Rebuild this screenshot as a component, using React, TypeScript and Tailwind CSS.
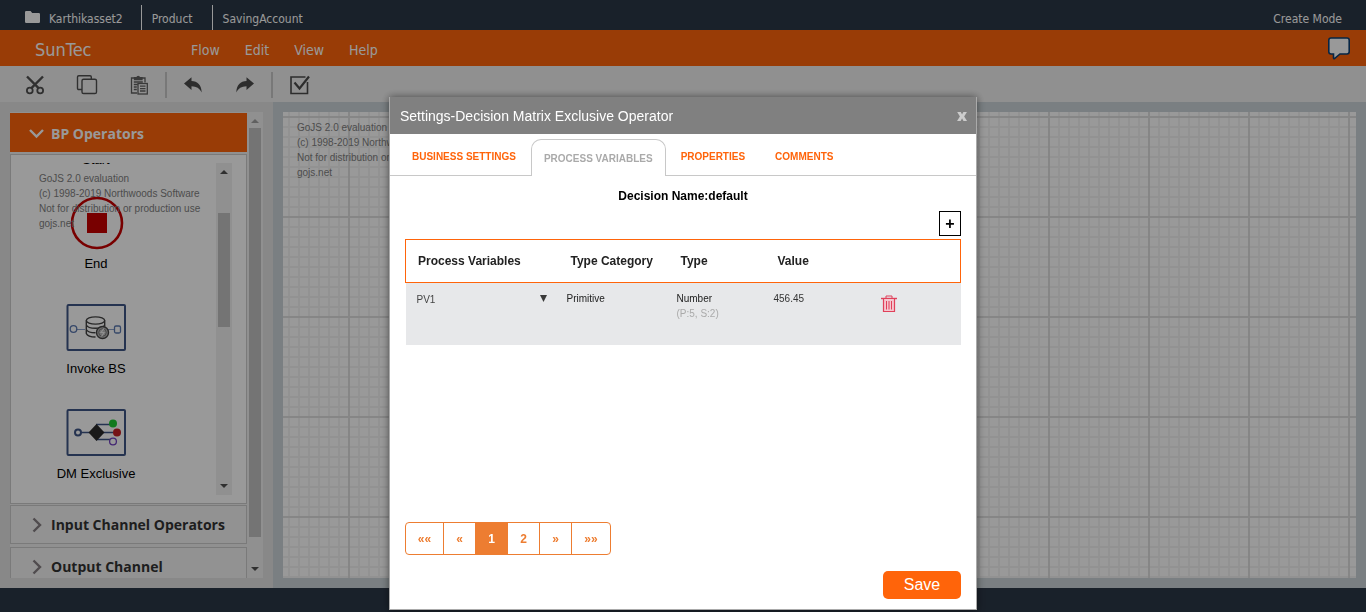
import React, { useState } from 'react';

const PROJECT_PATH = ['Product', 'SavingAccount'];
const MENUS = ['Flow', 'Edit', 'View', 'Help'];
const TABS = ['BUSINESS SETTINGS', 'PROCESS VARIABLES', 'PROPERTIES', 'COMMENTS'];
const PAGES = ['««', '«', '1', '2', '»', '»»'];
const EVALUATION = ['GoJS 2.0 evaluation', '(c) 1998-2019 Northwoods Software', 'Not for distribution or production use', 'gojs.net'];

function Evaluation() {
  return (
    <div className="text-[10px] leading-[15px] whitespace-nowrap text-[#7f7f7f]">
      {EVALUATION.map((line) => (
        <p key={line}>{line}</p>
      ))}
    </div>
  );
}

function TopBar() {
  return (
    <header className="flex h-[30px] shrink-0 items-end bg-[#2b3746] pr-6 pl-6 text-xs text-white">
      <div className="flex h-[25px] items-center pt-0.5 pr-[18px]">
        <svg width="17" height="14" viewBox="0 0 17 14" className="mr-2 mb-1" aria-hidden="true">
          <path d="M1 2.2Q1 1 2.2 1h4.4l1.6 2h6.6Q16 3 16 4.2v7.6q0 1.200-1.200 1.200H2.200Q1 13 1 11.800z" fill="#fff" />
        </svg>
        <span>Karthikasset2</span>
      </div>
      {PROJECT_PATH.map((part) => (
        <div key={part} className="flex h-[25px] items-center border-l border-white pt-0.5 pr-[19px] pl-[10px]">
          {part}
        </div>
      ))}
      <span className="ml-auto flex h-[25px] items-center pt-0.5">Create Mode</span>
    </header>
  );
}

function MenuBar() {
  return (
    <nav className="flex h-9 shrink-0 items-center bg-[#ff640a] pr-[15px] pl-[35px] text-white">
      <span className="mt-1 w-[156px] text-lg">SunTec</span>
      <div className="mt-1 flex gap-[25px] text-sm">
        {MENUS.map((menu) => (
          <button key={menu} type="button">
            {menu}
          </button>
        ))}
      </div>
      <button type="button" aria-label="Messages" className="ml-auto">
        <svg width="24" height="24" viewBox="0 0 24 24" aria-hidden="true">
          <path
            d="M4 2h16q2.200 0 2.200 2.200v11.600q0 2.200-2.200 2.200h-7L7.500 22.500Q6.500 23 6.500 21.800V18H4q-2.200 0-2.200-2.200V4.200Q1.800 2 4 2z"
            fill="#fff"
            stroke="#0b3f73"
            strokeWidth="1.600"
          />
        </svg>
      </button>
    </nav>
  );
}

function CutIcon() {
  return (
    <svg width="20" height="20" viewBox="0 0 20 20" fill="none" stroke="#505050" strokeWidth="1.800" aria-hidden="true">
      <circle cx="4.800" cy="15.500" r="2.900" />
      <circle cx="15.200" cy="15.500" r="2.900" />
      <path d="M2 1.500L13.600 13.200M18 1.500L6.400 13.200" strokeWidth="2.400" />
    </svg>
  );
}

function CopyIcon() {
  return (
    <svg width="22" height="22" viewBox="0 0 22 22" fill="none" stroke="#505050" strokeWidth="1.400" aria-hidden="true">
      <path d="M6 15.500H2.800Q1.500 15.500 1.500 14.200V3Q1.500 1.700 2.800 1.700H14Q15.300 1.700 15.300 3v2" />
      <rect x="6" y="5.200" width="14.500" height="14.300" rx="1.600" />
    </svg>
  );
}

function PasteIcon() {
  return (
    <svg width="20" height="20" viewBox="0 0 20 20" fill="none" stroke="#606060" strokeWidth="1.300" aria-hidden="true">
      <path d="M8 18H2.500V3H5M13 3h3v4.500" />
      <path d="M5.500 4.500V2.600H7.600Q9.200 0 10.800 2.600H13v1.900z" fill="#606060" />
      <path d="M4.800 7h9M4.800 9.500h4M4.800 12h3M4.800 14.500h3" />
      <rect x="9" y="8.500" width="9.300" height="10.500" fill="#f1f1f1" />
      <path d="M11 11.200h5.500M11 13.600h5.500M11 16h5.500" />
    </svg>
  );
}

function UndoIcon({ flipped = false }: { flipped?: boolean }) {
  return (
    <svg width="20" height="18" viewBox="0 0 20 18" className={flipped ? '-scale-x-100' : ''} aria-hidden="true">
      <path d="M1 7.500L8.500 1.200V5C14.500 5 18.500 9 18.700 16.500 16.500 12.300 13.500 10.500 8.500 10.300V14z" fill="#4c4c4c" />
    </svg>
  );
}

function ValidateIcon() {
  return (
    <svg width="22" height="20" viewBox="0 0 22 20" fill="none" stroke="#4c4c4c" aria-hidden="true">
      <path d="M16.500 2H2v16.500h16.500V7" strokeWidth="1.600" />
      <path d="M5.500 7.500l5 6L20 1.500" strokeWidth="2.200" />
    </svg>
  );
}

function Toolbar() {
  return (
    <div className="flex h-9 shrink-0 items-center bg-[#f1f1f1] pt-0.5 text-[#505050]">
      <div className="flex h-[26px] items-center gap-[31px] border-r-2 border-[#c8c8c8] pr-4 pl-[25px]">
        <button type="button" aria-label="Cut"><CutIcon /></button>
        <button type="button" aria-label="Copy"><CopyIcon /></button>
        <button type="button" aria-label="Paste"><PasteIcon /></button>
      </div>
      <div className="flex h-[26px] items-center gap-8 border-r-2 border-[#c8c8c8] px-4">
        <button type="button" aria-label="Undo"><UndoIcon /></button>
        <button type="button" aria-label="Redo"><UndoIcon flipped /></button>
      </div>
      <button type="button" aria-label="Validate" className="pl-4"><ValidateIcon /></button>
    </div>
  );
}

function EndShape() {
  return (
    <svg width="54" height="50" viewBox="0 0 54 50" className="overflow-visible" aria-hidden="true">
      <circle cx="28" cy="27" r="25" fill="none" stroke="#c80000" strokeWidth="2.600" />
      <rect x="18" y="17" width="20" height="20" fill="#c80000" />
    </svg>
  );
}

function InvokeShape() {
  return (
    <svg width="60" height="47" viewBox="0 0 60 47" fill="none" aria-hidden="true">
      <rect x="1.500" y="1" width="57.500" height="45" rx="1" stroke="#3f5686" strokeWidth="2" />
      <path d="M10 25.500h9M41 25.500h7" stroke="#8ba0c8" />
      <circle cx="7.500" cy="25" r="3.300" stroke="#5b78b0" strokeWidth="1.300" />
      <rect x="48.500" y="22" width="6" height="7" rx="1.500" stroke="#5b78b0" strokeWidth="1.300" />
      <g stroke="#444" strokeWidth="1.400">
        <ellipse cx="29.500" cy="16.500" rx="9.200" ry="3.600" />
        <path d="M20.300 16.500v13q1.500 3.500 9.200 3.500M38.700 16.500v6M20.300 21q1.500 3.300 9.200 3.300 7.700 0 9.200-3.300M20.300 25.500q1.500 3.300 9.200 3.300" />
        <circle cx="36.500" cy="28.500" r="6" fill="#bbb" />
        <circle cx="36.500" cy="28.500" r="3.800" stroke="#777" strokeWidth="1" />
        <path d="M38 24.500l-3 4h3l-2.500 4" stroke="#eee" strokeWidth="1.200" />
      </g>
    </svg>
  );
}

function MatrixShape() {
  return (
    <svg width="60" height="47" viewBox="0 0 60 47" fill="none" aria-hidden="true">
      <rect x="1.500" y="1" width="57.500" height="45" rx="1" stroke="#3f5686" strokeWidth="2" />
      <path d="M15 23.500h32M30 15.500h14M30 30.500h14" stroke="#3f5686" strokeWidth="1.300" />
      <circle cx="12" cy="23.500" r="3" stroke="#3f5686" strokeWidth="2" />
      <path d="M30.500 15l8 8.500-8 8.500-8-8.500z" fill="#2a2a2a" />
      <circle cx="47" cy="14.500" r="4" fill="#1fcc33" />
      <circle cx="51" cy="23.500" r="4" fill="#c42026" />
      <circle cx="47" cy="32.500" r="3.400" fill="#fff" stroke="#7040c0" strokeWidth="1.300" />
    </svg>
  );
}

const SHAPES = [
  { name: 'End', Shape: EndShape },
  { name: 'Invoke BS', Shape: InvokeShape },
  { name: 'DM Exclusive', Shape: MatrixShape },
];

function ScrollTrack({ children, dim = false }: { children: React.ReactNode; dim?: boolean }) {
  return (
    <div className="flex w-4 shrink-0 flex-col items-center bg-[#f1f1f1]" aria-hidden="true">
      <svg width="16" height="16" viewBox="0 0 16 16" className="shrink-0">
        <path d="M4 11l4-4 4 4z" fill={dim ? '#a0a0a0' : '#505050'} />
      </svg>
      {children}
      <svg width="16" height="16" viewBox="0 0 16 16" className="mt-auto shrink-0">
        <path d="M4 5l4 4 4-4z" fill="#505050" />
      </svg>
    </div>
  );
}

function Palette() {
  return (
    <div className="mt-[2px] h-[350px] shrink-0 border border-[#cbcbcb] bg-white py-2 pr-[14px]">
      <div className="flex h-[332px]">
        <div className="relative flex-1 overflow-hidden text-[13px] leading-4 text-black">
          <ul className="-mt-[11px] flex flex-col items-center gap-8 pr-[35px]">
            <li className="h-3">Start</li>
            {SHAPES.map(({ name, Shape }) => (
              <li key={name} className="flex flex-col items-center gap-2">
                <Shape />
                <span className="pt-0.5">{name}</span>
              </li>
            ))}
          </ul>
          <div className="absolute top-2 left-7">
            <Evaluation />
          </div>
        </div>
        <ScrollTrack>
          <span className="mt-[34px] h-[114px] w-3 bg-[#c1c1c1]" />
        </ScrollTrack>
      </div>
    </div>
  );
}

function Section({ title }: { title: string }) {
  return (
    <button
      type="button"
      className="flex h-[39px] shrink-0 items-center border border-[#cbcbcb] bg-[#f3f3f3] pl-5 text-left font-['Open_Sans',sans-serif] text-sm font-bold text-[#333]"
    >
      <svg width="20" height="16" viewBox="0 0 20 16" fill="none" aria-hidden="true">
        <path d="M2.500 1.500L9 8l-6.500 6.500" stroke="#857e82" strokeWidth="2.400" />
      </svg>
      {title}
    </button>
  );
}

function Sidebar() {
  return (
    <aside className="flex w-[273px] shrink-0 bg-[#e3e3e3] p-[10px]">
      <div className="flex min-w-0 flex-1 overflow-hidden bg-[#f1f1f1]">
        <div className="flex flex-1 flex-col overflow-hidden pt-px">
          <button
            type="button"
            className="flex h-[39px] shrink-0 items-center bg-[#ff640a] pt-0.5 pl-[19px] font-['Open_Sans',sans-serif] text-sm font-bold text-white"
          >
            <svg width="22" height="14" viewBox="0 0 22 14" fill="none" aria-hidden="true">
              <path d="M1 3l6.500 6.500L14 3" stroke="#fff" strokeWidth="2.400" />
            </svg>
            BP Operators
          </button>
          <Palette />
          <div className="mt-px flex flex-col gap-[3px]">
            <Section title="Input Channel Operators" />
            <Section title="Output Channel" />
          </div>
        </div>
        <ScrollTrack dim>
          <span className="h-[409px] w-3 bg-[#c1c1c1]" />
        </ScrollTrack>
      </div>
    </aside>
  );
}

function Diagram() {
  return (
    <main className="flex min-w-0 flex-1 bg-[#cbd4d9] p-[10px]">
      <div className="flex-1 overflow-hidden bg-white bg-[linear-gradient(90deg,#e0e0e0_2px,transparent_2px),linear-gradient(#e0e0e0_2px,transparent_2px),linear-gradient(90deg,#f4f4f4_2px,transparent_2px),linear-gradient(#f4f4f4_2px,transparent_2px)] bg-[size:100px_100px,100px_100px,10px_10px,10px_10px] bg-[position:65px_4px] px-[14px] py-2">
        <Evaluation />
      </div>
    </main>
  );
}

function TrashIcon() {
  return (
    <svg width="16" height="18" viewBox="0 0 16 18" fill="none" stroke="#e0405a" aria-hidden="true">
      <path d="M5 3V1h6v2" />
      <path d="M0 3.500h16" strokeWidth="1.400" />
      <path d="M2.500 4v12.500h11V4" fill="#f5c6cf" strokeWidth="1.200" />
      <path d="M5.500 6v8.500M8 6v8.500M10.500 6v8.500" />
    </svg>
  );
}

function VariablesTable() {
  return (
    <table className="w-full table-fixed border-collapse text-left">
      <colgroup>
        <col className="w-[153px]" />
        <col className="w-[110px]" />
        <col className="w-[97px]" />
        <col className="w-[97px]" />
        <col />
      </colgroup>
      <thead>
        <tr className="h-[43px] border border-[#ff640a] text-xs text-[#222]">
          <th className="pl-3">Process Variables</th>
          <th className="pl-3">Type Category</th>
          <th className="pl-3">Type</th>
          <th className="pl-3">Value</th>
          <th aria-label="Actions" />
        </tr>
      </thead>
      <tbody>
        <tr className="h-[62px] bg-[#e7e8ea] align-top text-[10px] leading-[15px] text-[#222]">
          <td className="pt-2 pr-3 pl-[7px]">
            <div className="relative">
              <select
                aria-label="Process variable"
                defaultValue="PV1"
                className="h-4 w-full appearance-none bg-transparent pl-1 text-[10px] text-[#444]"
              >
                <option>PV1</option>
              </select>
              <svg width="7" height="7" viewBox="0 0 7 7" className="pointer-events-none absolute top-1 right-0" aria-hidden="true">
                <path d="M0 0h7L3.500 7z" fill="#3a3a3a" />
              </svg>
            </div>
          </td>
          <td className="pt-2 pl-2">Primitive</td>
          <td className="pt-2 pl-2">
            Number
            <br />
            <span className="text-[#aaa]">(P:5, S:2)</span>
          </td>
          <td className="pt-2 pl-2 text-[#333]">456.45</td>
          <td className="pt-3 pl-[18px]">
            <button type="button" aria-label="Delete variable" className="block">
              <TrashIcon />
            </button>
          </td>
        </tr>
      </tbody>
    </table>
  );
}

function Pagination() {
  const [page, setPage] = useState('1');
  return (
    <div className="flex h-[33px] self-start overflow-hidden rounded-[4px] border border-[#ed7d31] text-[#ed7d31]">
      {PAGES.map((label) => (
        <button
          key={label}
          type="button"
          onClick={() => setPage(label)}
          className={`border-r border-[#ed7d31] text-xs font-bold last:border-r-0 ${
            label.length === 2 ? 'w-[38px]' : 'w-8'
          } ${label === page ? 'bg-[#ed7d31] text-white' : ''}`}
        >
          {label}
        </button>
      ))}
    </div>
  );
}

function SettingsDialog() {
  const [active, setActive] = useState('PROCESS VARIABLES');
  return (
    <div className="fixed inset-0 flex justify-center bg-black/40 pt-[97px] pb-[2px]">
      <div
        role="dialog"
        aria-labelledby="settings-title"
        className="flex w-[588px] max-w-full flex-col border border-t-0 border-[#aaa] bg-white shadow-[0_0_8px_rgba(0,0,0,0.5)]"
      >
        <div className="flex h-[37px] shrink-0 items-center justify-between bg-[#808080] pr-[9px] pl-[10px] text-white">
          <h2 id="settings-title" className="text-sm">Settings-Decision Matrix Exclusive Operator</h2>
          <button type="button" aria-label="Close" className="pb-0.5 font-['Open_Sans',sans-serif] text-base leading-none font-extrabold text-[#ccc]">x</button>
        </div>
        <div role="tablist" className="flex h-[42px] shrink-0 items-end border-b border-[#c8c8c8] pl-[10px] text-[10px] font-bold">
          {TABS.map((tab) => (
            <button
              key={tab}
              type="button"
              role="tab"
              aria-selected={tab === active}
              onClick={() => setActive(tab)}
              className={
                tab === active
                  ? '-mb-px h-[37px] rounded-t-[10px] border border-b-0 border-[#c8c8c8] bg-white px-3 text-[#aaa]'
                  : 'h-[37px] pr-[15px] pl-[15px] text-[#ff640a] first:pl-3'
              }
            >
              {tab}
            </button>
          ))}
        </div>
        <div className="flex min-h-0 flex-1 flex-col px-[15px] pt-3 pb-[10px]">
          <p className="text-center text-xs font-bold text-black">Decision Name:default</p>
          <button type="button" aria-label="Add variable" className="mt-[7px] mb-[3px] h-[25px] w-[22px] shrink-0 self-end border border-black text-base leading-none font-bold text-black">
            +
          </button>
          <VariablesTable />
          <div className="mt-auto flex flex-col gap-4">
            <Pagination />
            <button type="button" className="h-7 w-[78px] self-end rounded-[5px] bg-[#ff640a] text-base text-white">
              Save
            </button>
          </div>
        </div>
      </div>
    </div>
  );
}

export default function App() {
  return (
    <div className="flex h-screen flex-col overflow-hidden bg-[#2b3746] font-['Liberation_Sans',Arial,sans-serif]">
      <div className="font-['DejaVu_Sans_Condensed','DejaVu_Sans',sans-serif]">
        <TopBar />
        <MenuBar />
      </div>
      <Toolbar />
      <div className="flex min-h-0 flex-1">
        <Sidebar />
        <Diagram />
      </div>
      <footer className="h-6 shrink-0 bg-[#2b3746]" />
      <SettingsDialog />
    </div>
  );
}
